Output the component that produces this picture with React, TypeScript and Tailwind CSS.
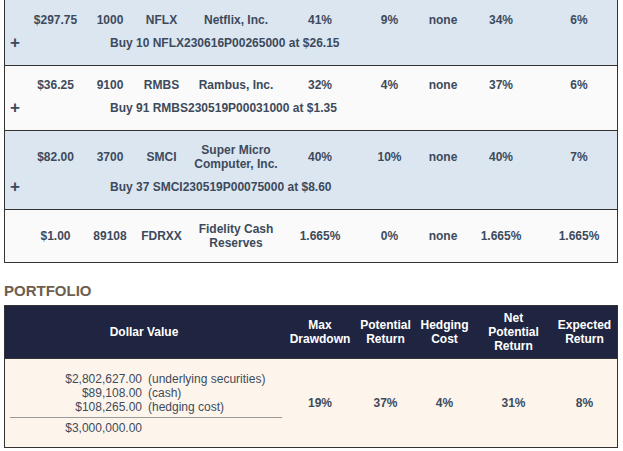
import React from 'react';

const holdings = [
  { price: '$297.75', shares: '1000', symbol: 'NFLX', name: 'Netflix, Inc.', drawdown: '41%', potential: '9%', hedge: 'none', net: '34%', expected: '6%', buy: 'Buy 10 NFLX230616P00265000 at $26.15' },
  { price: '$36.25', shares: '9100', symbol: 'RMBS', name: 'Rambus, Inc.', drawdown: '32%', potential: '4%', hedge: 'none', net: '37%', expected: '6%', buy: 'Buy 91 RMBS230519P00031000 at $1.35' },
  { price: '$82.00', shares: '3700', symbol: 'SMCI', name: 'Super Micro Computer, Inc.', drawdown: '40%', potential: '10%', hedge: 'none', net: '40%', expected: '7%', buy: 'Buy 37 SMCI230519P00075000 at $8.60' },
  { price: '$1.00', shares: '89108', symbol: 'FDRXX', name: 'Fidelity Cash Reserves', drawdown: '1.665%', potential: '0%', hedge: 'none', net: '1.665%', expected: '1.665%', buy: null },
];

const cols = 'grid grid-cols-[23px_55px_54px_49px_100px_68px_71px_36px_80px_76px] items-center';

export default function App() {
  return (
    <div className="min-h-[451px] bg-white font-['Liberation_Sans',Arial,sans-serif] text-[12px] leading-[14px] text-[#3d4a5b]">
      <div className="ml-[4px] w-[614px] border-x border-b border-[#333]">
        {holdings.map((h, i) => (
          <div
            key={h.symbol}
            className={`${i > 0 ? 'border-t border-[#333]' : ''} ${i % 2 === 0 ? 'bg-[#dbe6f1]' : 'bg-[#fafafa]'} ${i === 0 ? 'pt-[13px]' : 'pt-[12px]'} ${h.buy ? 'pb-[15px]' : 'pb-[12px]'} font-bold`}
          >
            <div className={cols}>
              <span />
              <span className="text-center">{h.price}</span>
              <span className="text-center">{h.shares}</span>
              <span className="text-center">{h.symbol}</span>
              <span className="px-1 text-center">{h.name}</span>
              <span className="text-center">{h.drawdown}</span>
              <span className="text-center">{h.potential}</span>
              <span className="text-center">{h.hedge}</span>
              <span className="text-center">{h.net}</span>
              <span className="text-center">{h.expected}</span>
            </div>
            {h.buy && (
              <div className="mt-[9px] flex items-center">
                <span className="w-[105px] pl-[5px] text-[17px] leading-[14px]">+</span>
                <span>{h.buy}</span>
              </div>
            )}
          </div>
        ))}
      </div>

      <h2 className="ml-[4px] mt-[19px] text-[15px] font-bold uppercase leading-[18px] text-[#6d5e4e]">Portfolio</h2>

      <div className="ml-[4px] mt-[5px] w-[614px] border border-[#333]">
        <div className="grid h-[52px] grid-cols-[278px_74px_57px_61px_77px_1fr] items-center bg-[#1f2540] text-center font-bold text-white">
          <span>Dollar Value</span>
          <span>Max<br />Drawdown</span>
          <span>Potential<br />Return</span>
          <span>Hedging<br />Cost</span>
          <span>Net<br />Potential<br />Return</span>
          <span>Expected<br />Return</span>
        </div>
        <div className="grid h-[89px] grid-cols-[278px_74px_57px_61px_77px_1fr] items-center border-t border-[#333] bg-[#fdf5eb]">
          <div className="ml-[5px] w-[272px]">
            <div className="grid grid-cols-[132px_1fr] gap-x-[6px]">
              <span className="text-right">$2,802,627.00</span>
              <span>(underlying securities)</span>
              <span className="text-right">$89,108.00</span>
              <span>(cash)</span>
              <span className="text-right">$108,265.00</span>
              <span>(hedging cost)</span>
            </div>
            <div className="mt-[3px] border-t border-[#9a9a9a]" />
            <div className="mt-[3px] w-[132px] text-right">$3,000,000.00</div>
          </div>
          <span className="text-center font-bold">19%</span>
          <span className="text-center font-bold">37%</span>
          <span className="text-center font-bold">4%</span>
          <span className="text-center font-bold">31%</span>
          <span className="text-center font-bold">8%</span>
        </div>
      </div>
    </div>
  );
}
